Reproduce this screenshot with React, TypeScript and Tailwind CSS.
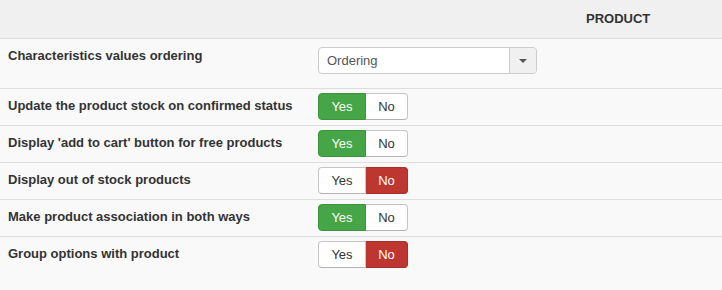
import React from 'react';

type Row = { label: string; value: 'yes' | 'no' };

const rows: Row[] = [
  { label: 'Update the product stock on confirmed status', value: 'yes' },
  { label: "Display 'add to cart' button for free products", value: 'yes' },
  { label: 'Display out of stock products', value: 'no' },
  { label: 'Make product association in both ways', value: 'yes' },
  { label: 'Group options with product', value: 'no' },
];

const Toggle: React.FC<{ value: 'yes' | 'no' }> = ({ value }) => {
  const yes = value === 'yes';
  return (
    <div className="flex h-[27px] w-[90px] text-[13px]">
      <span
        className={`flex w-[48px] items-center justify-center rounded-l-[4px] border ${
          yes ? 'border-[#3e923e] bg-[#46a546] text-white' : 'border-[#c5c5c5] border-b-[#b3b3b3] bg-white text-[#333]'
        }`}
      >
        Yes
      </span>
      <span
        className={`flex flex-1 items-center justify-center rounded-r-[4px] border border-l-0 ${
          yes ? 'border-[#c5c5c5] border-b-[#b3b3b3] bg-white text-[#333]' : 'border-[#a9302a] bg-[#bd362f] text-white'
        }`}
      >
        No
      </span>
    </div>
  );
};

export default function App() {
  return (
    <div className="h-[290px] w-[722px] bg-[#f9f9f9] font-['Liberation_Sans',Arial,sans-serif] text-[#333]">
      <div className="flex h-[39px] items-center border-b border-[#dddddd] bg-[#f0f0f0] pl-[586px] text-[13px] font-bold">
        PRODUCT
      </div>

      <div className="flex h-[50px] border-b border-[#dddddd]">
        <div className="w-[318px] pl-2 pt-2 text-[13px] font-bold leading-[18px]">Characteristics values ordering</div>
        <div className="pt-2">
          <div className="flex h-[27px] w-[219px] rounded-[4px] border border-[#cccccc] bg-white text-[13px] text-[#555]">
            <span className="flex flex-1 items-center pl-2">Ordering</span>
            <span className="flex w-[27px] items-center justify-center rounded-r-[4px] border-l border-[#cccccc] bg-[#f0f0f0]">
              <svg width="8" height="4" viewBox="0 0 8 4">
                <path d="M0 0h8L4 4z" fill="#555" />
              </svg>
            </span>
          </div>
        </div>
      </div>

      {rows.map((r, i) => (
        <div
          key={r.label}
          className={`flex h-[37px] ${i < rows.length - 1 ? 'border-b border-[#dddddd]' : ''}`}
        >
          <div className="w-[318px] pl-2 pt-2 text-[13px] font-bold leading-[18px]">{r.label}</div>
          <div className="pt-1">
            <Toggle value={r.value} />
          </div>
        </div>
      ))}
    </div>
  );
}
